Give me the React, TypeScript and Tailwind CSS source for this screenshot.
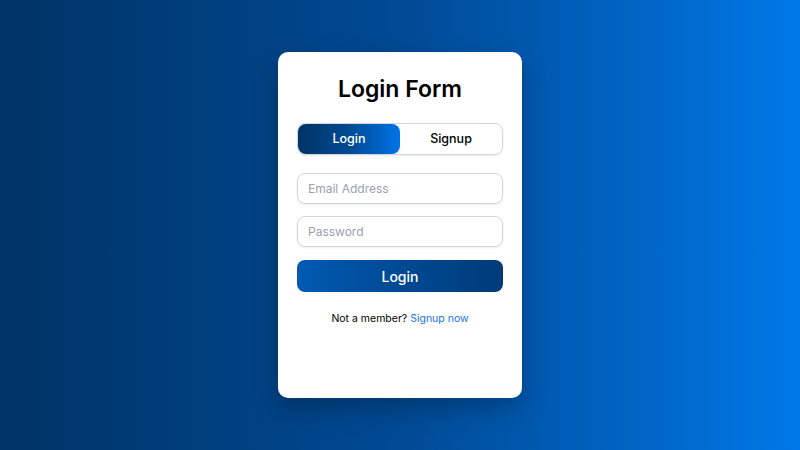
import { useState } from 'react'

export default function App() {
  const [tab, setTab] = useState<'login' | 'signup'>('login')

  return (
    <div
      className="flex h-[450px] w-[800px] items-start justify-center bg-gradient-to-r from-[#003366] via-[#004a94] to-[#0078e8] pt-[52px]"
      style={{ fontFamily: 'Inter, "Noto Sans", sans-serif' }}
    >
      <div className="flex h-[346px] w-[244px] flex-col rounded-[10px] bg-white px-[19px] pt-[22px] shadow-[0_10px_25px_rgba(0,0,0,0.25)]">
        <h1 className="text-center text-[23px] font-semibold leading-[30px] text-black">Login Form</h1>

        <div className="mt-[19px] flex h-[32px] rounded-[8px] border border-gray-300 shadow-[0_1px_2px_rgba(0,0,0,0.08)]">
          <button
            onClick={() => setTab('login')}
            className={
              tab === 'login'
                ? 'flex-1 rounded-[8px] bg-gradient-to-r from-[#003366] via-[#004a94] to-[#0073e6] text-[12.5px] font-medium text-white'
                : 'flex-1 text-[12.5px] font-medium text-black'
            }
          >
            Login
          </button>
          <button
            onClick={() => setTab('signup')}
            className={
              tab === 'signup'
                ? 'flex-1 rounded-[8px] bg-gradient-to-r from-[#003366] via-[#004a94] to-[#0073e6] text-[12.5px] font-medium text-white'
                : 'flex-1 text-[12.5px] font-medium text-black'
            }
          >
            Signup
          </button>
        </div>

        <input
          type="email"
          placeholder="Email Address"
          className="mt-[18px] h-[31px] w-full rounded-[8px] border border-gray-300 px-[10px] text-[12px] text-black shadow-[0_1px_2px_rgba(0,0,0,0.08)] outline-none placeholder:text-gray-400"
        />
        <input
          type="password"
          placeholder="Password"
          className="mt-[12px] h-[31px] w-full rounded-[8px] border border-gray-300 px-[10px] text-[12px] text-black shadow-[0_1px_2px_rgba(0,0,0,0.08)] outline-none placeholder:text-gray-400"
        />
        <button className="mt-[13px] h-[32px] w-full rounded-[8px] bg-gradient-to-r from-[#0059b3] via-[#004a94] to-[#003b78] text-[14px] font-medium text-white">
          Login
        </button>

        <p className="mt-[19px] text-center text-[10.5px] text-black">
          Not a member? <a className="text-[#1a73e8]">Signup now</a>
        </p>
      </div>
    </div>
  )
}
